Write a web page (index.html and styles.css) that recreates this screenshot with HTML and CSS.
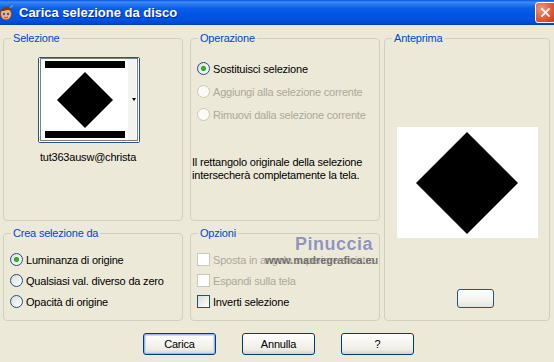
FILE: index.html
```html
<!DOCTYPE html>
<html lang="it">
<head>
    <meta charset="UTF-8">
    <title>Carica selezione da disco</title>
    <link rel="stylesheet" href="styles.css">
</head>
<body>
<div class="window">
    <div class="titlebar">
        <svg class="app-icon" viewBox="0 0 14 16">
            <ellipse cx="6" cy="9" rx="5.5" ry="6" fill="#f2b574" stroke="#8a4a1e"/>
            <path d="M1 6 Q3 1 9 2 Q12 3 12 6 Q8 4 4 6 Z" fill="#7a3b12"/>
            <circle cx="4" cy="9" r="1.2" fill="#2a5bd0"/>
            <circle cx="8" cy="9" r="1.2" fill="#2a5bd0"/>
            <path d="M4 12 Q6 14 8 12" stroke="#c0392b" fill="none"/>
            <path d="M10 3 L13 0" stroke="#4aa0ff" stroke-width="1.5"/>
        </svg>
        <span class="title">Carica selezione da disco</span>
        <span class="close">
            <svg viewBox="0 0 21 21"><path d="M6 6 L15 15 M15 6 L6 15" stroke="#fff" stroke-width="2"/></svg>
        </span>
    </div>

    <div class="client">
        <div class="groups">
            <div class="col col-left">
                <fieldset class="group g-top">
                    <legend>Selezione</legend>
                    <div class="thumb">
                        <svg width="100" height="84" viewBox="0 0 100 84">
                            <rect width="100" height="84" fill="#fff"/>
                            <rect x="89" y="1" width="8" height="82" fill="#f3f3f1"/>
                            <rect x="6" y="3" width="80" height="7" fill="#000"/>
                            <rect x="6" y="73" width="80" height="7" fill="#000"/>
                            <polygon points="46,14 74,42 46,70 18,42" fill="#000"/>
                            <polygon points="93,40 97,40 95,43" fill="#000"/>
                            <rect x="1.5" y="0.5" width="97" height="82" fill="none" stroke="#000" stroke-dasharray="1 1"/>
                        </svg>
                    </div>
                    <div class="thumb-name">tut363ausw@christa</div>
                </fieldset>
                <fieldset class="group g-bottom">
                    <legend>Crea selezione da</legend>
                    <div class="opts">
                        <div class="opt"><span class="radio checked"></span>Luminanza di origine</div>
                        <div class="opt"><span class="radio"></span>Qualsiasi val. diverso da zero</div>
                        <div class="opt"><span class="radio"></span>Opacità di origine</div>
                    </div>
                </fieldset>
            </div>

            <div class="col col-mid">
                <fieldset class="group g-top">
                    <legend>Operazione</legend>
                    <div class="opts opts-oper">
                        <div class="opt"><span class="radio checked"></span>Sostituisci selezione</div>
                        <div class="opt off"><span class="radio"></span>Aggiungi alla selezione corrente</div>
                        <div class="opt off"><span class="radio"></span>Rimuovi dalla selezione corrente</div>
                    </div>
                    <p class="note">Il rettangolo originale della selezione<br>intersecherà completamente la tela.</p>
                </fieldset>
                <fieldset class="group g-bottom">
                    <legend>Opzioni</legend>
                    <div class="opts">
                        <div class="opt off"><span class="check"></span>Sposta in angolo superiore sinistro</div>
                        <div class="opt off"><span class="check"></span>Espandi sulla tela</div>
                        <div class="opt"><span class="check"></span>Inverti selezione</div>
                    </div>
                </fieldset>
            </div>

            <fieldset class="group g-preview">
                <legend>Anteprima</legend>
                <div class="preview-img">
                    <svg width="141" height="111" viewBox="0 0 141 111">
                        <rect width="141" height="111" fill="#fff"/>
                        <polygon points="70,5 121,56 70,107 19,56" fill="#000"/>
                    </svg>
                </div>
                <div class="preview-btn"></div>
            </fieldset>
        </div>

        <div class="buttons">
            <button class="btn default">Carica</button>
            <button class="btn">Annulla</button>
            <button class="btn">?</button>
        </div>
    </div>

    <div class="watermark">
        <span class="wm-name">Pinuccia</span>
        <span class="wm-site">www.madregrafica.eu</span>
    </div>
</div>
</body>
</html>
```

FILE: styles.css
```css
* {
    margin: 0;
    padding: 0;
    box-sizing: border-box;
}

body {
    width: 554px;
    height: 362px;
    overflow: hidden;
    background: #ece9d8;
    color: #000;
    font-family: "Liberation Sans", Arial, sans-serif;
    font-size: 11px;
    letter-spacing: -0.2px;
}

.window {
    position: relative;
    height: 362px;
}

/* title bar */

.titlebar {
    height: 25px;
    display: flex;
    align-items: center;
    overflow: hidden;
    color: #fff;
    background: linear-gradient(180deg, #0a55e0 0px, #3c8cf5 2px, #2a7af0 4px, #0b5fe8 8px, #0055e5 14px, #0052df 20px, #0045cc 24px, #003ab8 25px);
}

.app-icon {
    flex: none;
    width: 14px;
    height: 16px;
    margin: 0 5px 0 0;
}

.title {
    font-size: 13px;
    font-weight: bold;
    letter-spacing: 0;
    text-shadow: 1px 1px 0 #0b2a9a;
}

.close {
    flex: none;
    margin-left: auto;
    margin-right: -2px;
    width: 21px;
    height: 21px;
    border: 1px solid #fff;
    border-radius: 3px;
    background: radial-gradient(circle at 30% 30%, #f3977a, #e05a33 55%, #c23a1c);
}

.close svg {
    display: block;
    width: 19px;
    height: 19px;
}

/* groups */

.client {
    padding: 7px 0 0 3px;
}

.groups {
    display: flex;
    height: 289px;
}

.col {
    display: flex;
    flex-direction: column;
    gap: 6px;
}

.col-left {
    width: 180px;
}

.col-mid {
    width: 190px;
    margin-left: 7px;
}

.group {
    min-width: 0;
    border: 1px solid #d0d0bf;
    border-radius: 4px;
}

.group legend {
    margin-left: 7px;
    padding: 0 2px;
    line-height: 13px;
    color: #0046d5;
}

.g-top {
    height: 189px;
}

.g-bottom {
    height: 94px;
}

.g-preview {
    width: 166px;
    height: 289px;
    margin-left: 4px;
}

/* selezione */

.thumb {
    width: 102px;
    height: 86px;
    margin: 12px 0 0 34px;
    border: 1px solid #27537f;
    border-radius: 2px;
    background: #fff;
}

.thumb svg {
    display: block;
}

.thumb-name {
    width: 102px;
    margin: 8px 0 0 33px;
    line-height: 13px;
    text-align: center;
    white-space: nowrap;
}

/* radio and check rows */

.opts {
    display: flex;
    flex-direction: column;
    gap: 8px;
    margin-top: 13px;
    padding-left: 6px;
}

.opts-oper {
    margin-top: 17px;
    gap: 10px;
}

.opt {
    display: flex;
    align-items: center;
    height: 13px;
    white-space: nowrap;
}

.opt.off {
    color: #aca899;
}

.radio {
    flex: none;
    width: 13px;
    height: 13px;
    margin-right: 3px;
    border: 1px solid #1c5180;
    border-radius: 50%;
    background: linear-gradient(135deg, #dcdcd7, #fff);
}

.radio.checked {
    background: radial-gradient(circle, #3cb83a 0, #21a121 2px, transparent 3px), linear-gradient(135deg, #dcdcd7, #fff);
}

.off .radio {
    border-color: #cac8bb;
    background: #fbfaf5;
}

.check {
    flex: none;
    width: 13px;
    height: 13px;
    margin-right: 3px;
    border: 1px solid #1c5180;
    background: linear-gradient(135deg, #dcdcd7, #fff);
}

.off .check {
    border-color: #cac8bb;
    background: #fff;
}

.note {
    margin: 35px 0 0 1px;
    line-height: 13px;
}

/* anteprima */

.preview-img {
    width: 141px;
    height: 111px;
    margin: 82px 0 0 12px;
}

.preview-img svg {
    display: block;
}

.preview-btn {
    width: 37px;
    height: 19px;
    margin: 51px 0 0 72px;
    border: 1px solid #27537f;
    border-radius: 3px;
    background: linear-gradient(#fff, #f4f3ee 60%, #e6e3d6);
}

/* buttons */

.buttons {
    display: flex;
    justify-content: center;
    gap: 26px;
    margin-top: 12px;
}

.btn {
    width: 73px;
    height: 22px;
    border: 1px solid #003c74;
    border-radius: 3px;
    background: linear-gradient(#fff, #f6f5f0 45%, #ecebe4 80%, #d6d0c5);
    font-family: inherit;
    font-size: 11px;
    letter-spacing: -0.2px;
    color: #000;
}

.btn.default {
    box-shadow: inset 0 0 0 1px #98b8ea, inset 0 0 0 2px #cddcf6;
}

/* watermark over the options */

.watermark {
    position: absolute;
    left: 265px;
    top: 234px;
    width: 120px;
}

.wm-name {
    display: block;
    margin-left: 30px;
    font-size: 18px;
    font-weight: bold;
    letter-spacing: 0.5px;
    line-height: 20px;
    color: #9193b8;
    text-shadow: 0 0 1px #fff;
}

.wm-site {
    display: block;
    font-size: 11px;
    font-weight: bold;
    letter-spacing: 0;
    line-height: 12px;
    color: rgba(70, 70, 80, 0.7);
}
```
